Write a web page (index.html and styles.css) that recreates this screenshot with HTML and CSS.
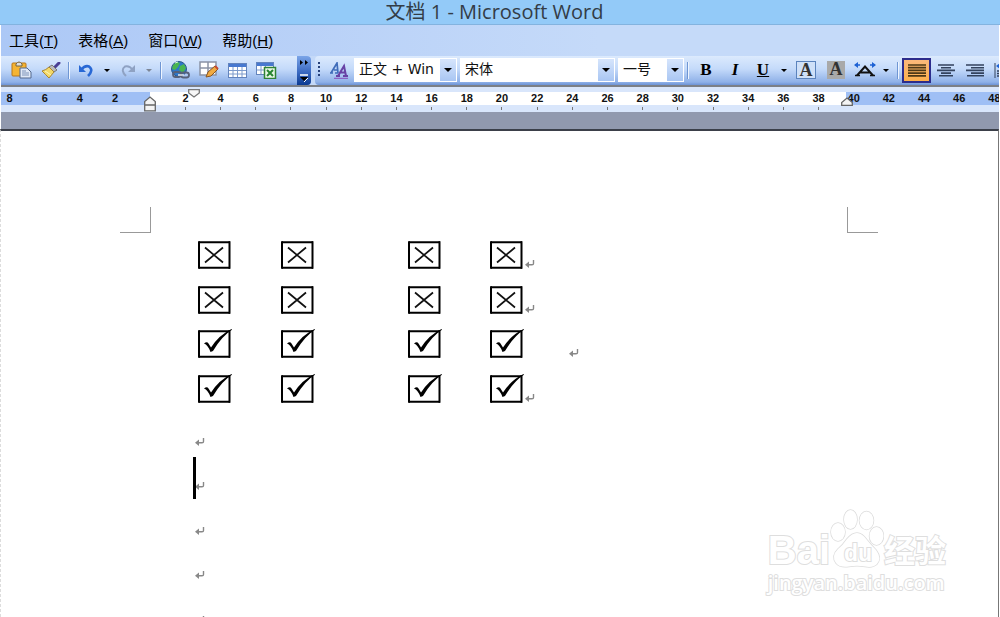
FILE: index.html
```html
<!DOCTYPE html>
<html lang="zh-CN">
<head>
<meta charset="utf-8">
<title>文档 1 - Microsoft Word</title>
<link rel="stylesheet" href="styles.css">
</head>
<body>
<svg class="defs" aria-hidden="true">
  <symbol id="box-x" viewBox="0 0 36 30"><path d="M2 3.2H33M2 28.8H33" stroke="#000" stroke-width="2"/><path d="M2 2.2V29.8M32.5 2.2V29.8" stroke="#000" stroke-width="2"/><path d="M8 8.500L26 23.500M26 8.500L8 23.500" stroke="#111" stroke-width="1.700"/></symbol>
  <symbol id="box-v" viewBox="0 0 36 30"><path d="M2 3.200H33M2 28.800H33" stroke="#000" stroke-width="2"/><path d="M2 2.200V29.800M32.500 2.200V29.800" stroke="#000" stroke-width="2"/><path d="M7 15.500Q10 13 11.500 15.500L14 19.500Q22 7 34.500 1L35 1.800Q25 8 16 23L13.500 24Q11 17 7 15.500Z" fill="#000"/></symbol>
  <symbol id="mark" viewBox="0 0 10 8"><path d="M8.500 0V3.500Q8.500 4.800 7 4.800H3" fill="none" stroke="#888" stroke-width="1.400"/><path d="M0 4.800L4 1.600V8Z" fill="#888"/></symbol>
  <symbol id="down" viewBox="0 0 8 4"><path d="M0 0H8L4 4Z" fill="currentColor"/></symbol>
</svg>
<div class="window">
  <header class="title">文档 1 - Microsoft Word</header>
  <nav class="menu">
    <button>工具(<u>T</u>)</button>
    <button>表格(<u>A</u>)</button>
    <button>窗口(<u>W</u>)</button>
    <button>帮助(<u>H</u>)</button>
  </nav>
  <div class="bars">
    <div class="bar standard">
      <button class="tool w30" aria-label="粘贴"><svg width="21" height="18" viewBox="0 0 21 18"><rect x="1" y="2" width="14" height="13" rx="1" fill="#f5b433" stroke="#b7761b"/><path d="M5 3Q8-1 11 3V5H5Z" fill="#ddd" stroke="#77643a"/><path d="M9 7H16L20 11V17H9Z" fill="#dfe8f6" stroke="#53688d"/><path d="M11 10H15M11 12H18M11 14H18" stroke="#7e94b8"/></svg></button>
      <button class="tool w30" aria-label="格式刷"><svg width="20" height="17" viewBox="0 0 20 17"><path d="M14 5L18 1" stroke="#4a3f94" stroke-width="3" stroke-linecap="round"/><path d="M11 3L16 8L13 10L8 5Z" fill="#bbb" stroke="#777"/><path d="M8 5L13 10L8 16Q4 12 1 9Q5 8 8 5Z" fill="#f3d968" stroke="#aa8630"/><path d="M4 9L10 13" stroke="#fff6b5"/></svg></button>
      <span class="sep"></span>
      <button class="tool w28" aria-label="撤消"><svg width="16" height="15" viewBox="0 0 16 15"><path d="M3 7Q7 2 11 3.500Q16 7 10 13" fill="none" stroke="#2868d5" stroke-width="2.600"/><path d="M1 2V9H8Z" fill="#2868d5"/></svg></button>
      <button class="tool drop" aria-label="撤消列表"><svg width="6" height="3"><use href="#down"/></svg></button>
      <button class="tool w28 off" aria-label="恢复"><svg width="16" height="15" viewBox="0 0 16 15"><path d="M13 7Q9 2 5 3.500Q0 7 6 13" fill="none" stroke="#8fa2c3" stroke-width="2"/><path d="M15 2V9H8Z" fill="#8fa2c3"/></svg></button>
      <button class="tool drop off" aria-label="恢复列表"><svg width="6" height="3"><use href="#down"/></svg></button>
      <span class="sep wide"></span>
      <button class="tool" aria-label="超链接"><svg width="20" height="18" viewBox="0 0 20 18"><circle cx="9" cy="8" r="7.500" fill="#2d77c9" stroke="#2b568c"/><path d="M3 4Q7 0 10 2L8 6L5 9L2 8ZM10 5L14 3L16 7L13 12L9 9Z" fill="#48b550"/><path d="M5 2L8 1" stroke="#d4ffd0"/><rect x="3" y="11" width="8" height="5" rx="2.500" fill="none" stroke="#56617a" stroke-width="1.800"/><rect x="11" y="11.500" width="8" height="5" rx="2.500" fill="none" stroke="#56617a" stroke-width="1.800"/><path d="M8 14H14" stroke="#e4e8ef" stroke-width="1.500"/></svg></button>
      <button class="tool" aria-label="表格和边框"><svg width="20" height="18" viewBox="0 0 20 18"><rect x="1" y="1" width="16" height="13" fill="#fff" stroke="#8b93a5" stroke-width="1.500"/><path d="M9 1V14M1 7H17" stroke="#8b93a5" stroke-width="1.500"/><path d="M7 16L9 11L16 5L19 8L12 15Z" fill="#f0aa42" stroke="#8a5622"/><path d="M16 5L19 8" stroke="#c34831" stroke-width="2"/></svg></button>
      <button class="tool" aria-label="插入表格"><svg width="19" height="15" viewBox="0 0 19 15"><rect x=".5" y=".5" width="18" height="14" fill="#fff" stroke="#6384bd"/><rect x="1" y="1" width="17" height="3" fill="#4778d0"/><path d="M1 7.500H18M1 11H18M5 4V14M9.500 4V14M14 4V14" stroke="#7d9bcc"/></svg></button>
      <button class="tool" aria-label="插入 Excel 表格"><svg width="21" height="17" viewBox="0 0 21 17"><rect x=".5" y=".5" width="17" height="12" fill="#fff" stroke="#6384bd"/><rect x="1" y="1" width="16" height="3" fill="#4778d0"/><path d="M1 8H9M5 4V12M9.500 4V8" stroke="#7d9bcc"/><rect x="8.500" y="5.500" width="11" height="11" fill="#e9f7e6" stroke="#2f8235" stroke-width="1.500"/><path d="M11 8L17 14M17 8L11 14" stroke="#278530" stroke-width="2"/></svg></button>
      <button class="more" aria-label="工具栏选项"><svg width="10" height="24" viewBox="0 0 10 24"><path d="M1 2L4 4.500L1 7ZM6 2L9 4.500L6 7Z" fill="#000"/><path d="M1 17H9" stroke="#fff" stroke-width="1.500"/><path d="M1 19H9L5 23Z" fill="#000"/><path d="M9 20L5 24" stroke="#fff"/></svg></button>
    </div>
    <div class="bar format">
      <span class="grip"></span>
      <button class="tool" aria-label="格式窗格"><svg width="19" height="17" viewBox="0 0 19 17"><path d="M0 11H3M5 11H8M1 11L7 1L8 11M4 8H8" fill="none" stroke="#3f6cb9" stroke-width="1.700"/><path d="M6 14H10M13 14H18M8 14L14 4L16 14M10 10.500H15" fill="none" stroke="#6842a5" stroke-width="2"/><path d="M4 16.300H18" stroke="#8a4bbb"/></svg></button>
      <label class="combo style"><select aria-label="样式"><option>正文 + Win</option></select><span class="arrow"><svg width="8" height="4"><use href="#down"/></svg></span></label>
      <label class="combo font"><select aria-label="字体"><option>宋体</option></select><span class="arrow"><svg width="8" height="4"><use href="#down"/></svg></span></label>
      <label class="combo size"><select aria-label="字号"><option>一号</option></select><span class="arrow"><svg width="8" height="4"><use href="#down"/></svg></span></label>
      <span class="sep"></span>
      <button class="tool w30 letter"><b>B</b></button>
      <button class="tool w28 letter"><i>I</i></button>
      <button class="tool w28 letter"><u>U</u></button>
      <button class="tool drop" aria-label="下划线列表"><svg width="6" height="3"><use href="#down"/></svg></button>
      <button class="tool w30 letter"><span class="framed">A</span></button>
      <button class="tool w30 letter"><span class="shaded">A</span></button>
      <button class="tool w28" aria-label="字符缩放"><svg width="22" height="16" viewBox="0 0 22 16"><path d="M1 3H6M16 3H21" stroke="#1e62d4" stroke-width="1.500"/><path d="M0 3L4 0V6ZM22 3L18 0V6Z" fill="#1e62d4"/><path d="M3 13.500L11 4.500L19 13.500M6 10.500H16" fill="none" stroke="#111" stroke-width="2"/><path d="M1 13.500H6M16 13.500H21" stroke="#111" stroke-width="1.600"/></svg></button>
      <button class="tool drop" aria-label="缩放列表"><svg width="6" height="3"><use href="#down"/></svg></button>
      <span class="sep wide"></span>
      <button class="tool active" aria-label="两端对齐"><svg width="18" height="13" viewBox="0 0 18 13"><path d="M0 1H18M0 3.700H18M0 6.400H18M0 9.100H18M0 11.800H18" stroke="#4d3816" stroke-width="1.700"/></svg></button>
      <button class="tool" aria-label="居中"><svg width="18" height="13" viewBox="0 0 18 13"><path d="M1 1H17M4 3.700H14M0 6.400H18M4 9.100H14M2 11.800H16" stroke="#33425d" stroke-width="1.600"/></svg></button>
      <button class="tool" aria-label="右对齐"><svg width="18" height="13" viewBox="0 0 18 13"><path d="M0 1H18M5 3.700H18M0 6.400H18M5 9.100H18M1 11.800H18" stroke="#33425d" stroke-width="1.600"/></svg></button>
      <button class="tool last" aria-label="分散对齐"><svg width="18" height="15" viewBox="0 0 18 15"><path d="M1 0V15M17 0V15" stroke="#33425d"/><path d="M2 3L6 0V6Z" fill="#1e62d4"/><path d="M3 8H15M3 10.500H15M3 13H15" stroke="#33425d" stroke-width="1.500"/></svg></button>
    </div>
  </div>
  <div class="ruler">
    <div class="scale">
      <span>8</span><span>6</span><span>4</span><span>2</span><span></span>
      <span class="t">2</span><span class="t">4</span><span class="t">6</span><span class="t">8</span><span class="t">10</span><span class="t">12</span><span class="t">14</span><span class="t">16</span><span class="t">18</span><span class="t">20</span><span class="t">22</span><span class="t">24</span><span class="t">26</span><span class="t">28</span><span class="t">30</span><span class="t">32</span><span class="t">34</span><span class="t">36</span><span class="t">38</span><span>40</span><span>42</span><span>44</span><span>46</span><span>48</span>
    </div>
    <svg class="indent left" width="12" height="16" viewBox="0 0 12 16"><path d="M.7 14.800V5.500L6 1L11.300 5.500V14.800ZM.7 9H11.300" fill="#f4f4f4" stroke="#666" stroke-width="1.300"/></svg>
    <svg class="indent first" width="12" height="9" viewBox="0 0 12 9"><path d="M.7.7H11.300V4L6 8L.7 4Z" fill="#f8f8f8" stroke="#777" stroke-width="1.300"/></svg>
    <svg class="indent right" width="12" height="9" viewBox="0 0 12 9"><path d="M.7 8.300V5.500L6 1L11.300 5.500V8.300Z" fill="#f4f4f4" stroke="#666" stroke-width="1.300"/></svg>
  </div>
  <div class="desk"></div>
  <main class="page">
    <div class="corners"><span class="corner start"></span><span class="corner end"></span></div>
    <div class="lines">
      <div class="line"><svg class="box"><use href="#box-x"/></svg><svg class="box"><use href="#box-x"/></svg><svg class="box"><use href="#box-x"/></svg><svg class="box"><use href="#box-x"/></svg><svg class="mark"><use href="#mark"/></svg></div>
      <div class="line"><svg class="box"><use href="#box-x"/></svg><svg class="box"><use href="#box-x"/></svg><svg class="box"><use href="#box-x"/></svg><svg class="box"><use href="#box-x"/></svg><svg class="mark"><use href="#mark"/></svg></div>
      <div class="line spaced"><svg class="box"><use href="#box-v"/></svg><svg class="box"><use href="#box-v"/></svg><svg class="box"><use href="#box-v"/></svg><svg class="box"><use href="#box-v"/></svg><svg class="mark"><use href="#mark"/></svg></div>
      <div class="line"><svg class="box"><use href="#box-v"/></svg><svg class="box"><use href="#box-v"/></svg><svg class="box"><use href="#box-v"/></svg><svg class="box"><use href="#box-v"/></svg><svg class="mark"><use href="#mark"/></svg></div>
      <div class="line empty"><svg class="mark"><use href="#mark"/></svg></div>
      <div class="line empty current"><span class="caret"></span><svg class="mark"><use href="#mark"/></svg></div>
      <div class="line empty"><svg class="mark"><use href="#mark"/></svg></div>
      <div class="line empty"><svg class="mark"><use href="#mark"/></svg></div>
      <div class="line empty"><svg class="mark"><use href="#mark"/></svg></div>
    </div>
    <div class="watermark">
      <div class="brand">
        <span class="bai">Bai</span>
        <span class="paw"><svg width="54" height="60" viewBox="0 0 54 60"><g fill="#fff" stroke="#dcdcdc" stroke-width="1.500"><ellipse cx="8" cy="23" rx="7" ry="9"/><ellipse cx="20.500" cy="10.500" rx="6.500" ry="9.500"/><ellipse cx="36.500" cy="11.500" rx="7" ry="9"/><ellipse cx="46.500" cy="27" rx="7" ry="9"/><path d="M27 24Q32 24 37 31Q41 36 46 41Q52 49 47 55Q43 59 35 57.500Q27 56 19 57.500Q10 59 6 54Q1 47 8 40Q13 36 17 30Q22 24 27 24Z"/></g></svg><span class="du">du</span></span>
        <span class="cn">经验</span>
      </div>
      <div class="url">jingyan.baidu.com</div>
    </div>
  </main>
</div>
</body>
</html>
```
FILE: styles.css
```css
* { box-sizing: border-box; }
body { margin: 0; background: #fff; font-family: "Liberation Sans", "Noto Sans CJK SC", sans-serif; }
button { border: 0; padding: 0; background: none; color: #000; font: inherit; }
svg { display: block; flex: none; }
.defs { position: absolute; width: 0; height: 0; }
.window { display: flex; flex-direction: column; height: 100vh; overflow: hidden; }

.title { height: 25px; line-height: 24px; padding-right: 11px; background: #93caf8; border-bottom: 1px solid #83b3df; color: #333c46; font-family: "Open Sans", "Noto Sans CJK SC", sans-serif; font-size: 20px; text-align: center; }
.menu { display: flex; gap: 20px; height: 31px; margin: 0 1px; padding: 0 8px; background: linear-gradient(90deg, #acc8f6, #c5daf9 60%); color: #111; font-size: 15px; }
.menu button { height: 28px; }

.bars { display: flex; height: 31px; margin: 0 1px; background: #c4d9f8; border-bottom: 2px solid #7c8087; overflow: hidden; }
.bar { display: flex; align-items: center; height: 29px; padding-bottom: 1px; background: linear-gradient(#dceafd, #c4dafa 45%, #8fb1e8 90%, #6d93d5); }
.standard { width: 310px; padding-left: 5px; flex: none; border-radius: 0 4px 4px 0; }
.format { flex: 1; min-width: 0; margin-left: 4px; padding-left: 2px; border-radius: 4px 0 0 4px; }
.tool { display: flex; flex: none; align-items: center; justify-content: center; width: 29px; height: 24px; }
.tool.w28 { width: 28px; }
.tool.w30 { width: 30px; }
.tool.drop { width: 14px; }
.tool.off { color: #7d8696; }
.tool.last { width: 28px; }
.sep { flex: none; width: 6px; height: 17px; background: linear-gradient(90deg, #6f96d3 1px, #eef5ff 1px) 2px 0 / 2px 100% no-repeat; }
.sep.wide { width: 9px; background-position: 4px 0; }
.more { display: flex; justify-content: center; align-items: center; width: 14px; height: 29px; margin-left: auto; border-radius: 0 4px 4px 0; background: linear-gradient(#7ba5e8, #3564bd 60%, #0b3a91); }
.grip { flex: none; width: 8px; height: 16px; background: linear-gradient(#27417a 50%, transparent 50%) 1px 0 / 2px 4px repeat-y; }

.combo { display: flex; flex: none; height: 24px; margin: 0 3px 0 0; padding: 1px; background: #fff; }
.combo select { flex: 1; min-width: 0; appearance: none; border: 0; border-radius: 0; margin: 0; padding: 0 0 2px 4px; background: #fff; color: #111; font-family: "DejaVu Sans", "Noto Sans CJK SC", sans-serif; font-size: 14px; line-height: 20px; }
.arrow { display: flex; align-items: center; justify-content: center; width: 16px; background: linear-gradient(#d6e5fc, #a9c6f3); }
.style { width: 103px; }
.font { width: 155px; }
.size { width: 66px; margin-right: 1px; }

.letter { font-family: "Liberation Serif", serif; font-size: 17px; font-weight: bold; }
.framed, .shaded { width: 20px; height: 18px; line-height: 17px; font-size: 18px; border: 1px solid #5b83bd; background: #cfe0f8; color: #333; }
.shaded { width: 18px; border: 0; background: #a9a9a9; }
.active { height: 25px; border: 2px solid #2c2c8c; background: linear-gradient(#fbb87a, #fcb04d); }

.ruler { position: relative; height: 25px; margin: 0 1px; padding-top: 5px; background: #d9e6fb; overflow: hidden; }
.scale { display: grid; grid-template-columns: repeat(29, 1fr); margin: 0 -13px 0 -9px; height: 20px; background: linear-gradient(90deg, #9fbff5 158px, #fff 158px calc(100% - 166px), #9fbff5 calc(100% - 166px)) 0 0 / 100% 13px no-repeat; font-size: 11px; font-weight: bold; line-height: 13px; text-align: center; color: #111; }
.t { background: linear-gradient(#777, #777) 50% 15px / 1px 3px no-repeat; }
.indent { position: absolute; }
.indent.left { left: 143px; bottom: 0; }
.indent.first { left: 187px; top: 2px; }
.indent.right { right: 146px; bottom: 6px; }

.desk { height: 17px; margin: 0 1px; background: #9199ae; }
.page { position: relative; flex: 1; min-height: 0; margin: 0 1px 0 0; border-top: 2px solid #3b3f49; border-right: 1px solid #777; border-left: 1px dashed #ddd; overflow: hidden; }
.corners { display: flex; justify-content: space-between; padding: 76px 120px 0 119px; }
.corner { width: 31px; height: 26px; border-bottom: 1px solid #999; }
.start { border-right: 1px solid #999; }
.end { border-left: 1px solid #999; }
.lines { display: grid; grid-template-rows: repeat(9, 1fr); height: 400px; margin-left: 192px; }
.line { display: grid; grid-template-columns: 83px 127px 82px 36px auto; align-items: center; justify-content: start; padding-left: 4px; }
.box { width: 36px; height: 30px; margin-bottom: 2px; }
.mark { width: 10px; height: 8px; margin-top: 18px; }
.spaced { grid-template-columns: 83px 127px 82px 80px auto; }
.empty { display: flex; padding-left: 2px; }
.current { position: relative; }
.caret { position: absolute; left: 0; top: 2px; bottom: 1px; width: 3px; background: #000; }

.watermark { position: absolute; right: 52px; bottom: 20px; color: #fff; font-weight: bold; -webkit-text-stroke: 2px #dedede; paint-order: stroke fill; }
.brand { display: flex; align-items: flex-end; }
.bai { font-size: 40px; line-height: 37px; }
.paw { position: relative; }
.du { position: absolute; left: 14px; bottom: 4px; font-size: 23px; line-height: 24px; }
.cn { font-size: 31px; line-height: 32px; padding-bottom: 1px; }
.url { font-family: "Open Sans", sans-serif; font-size: 20px; line-height: 28px; font-weight: 600; }
```
